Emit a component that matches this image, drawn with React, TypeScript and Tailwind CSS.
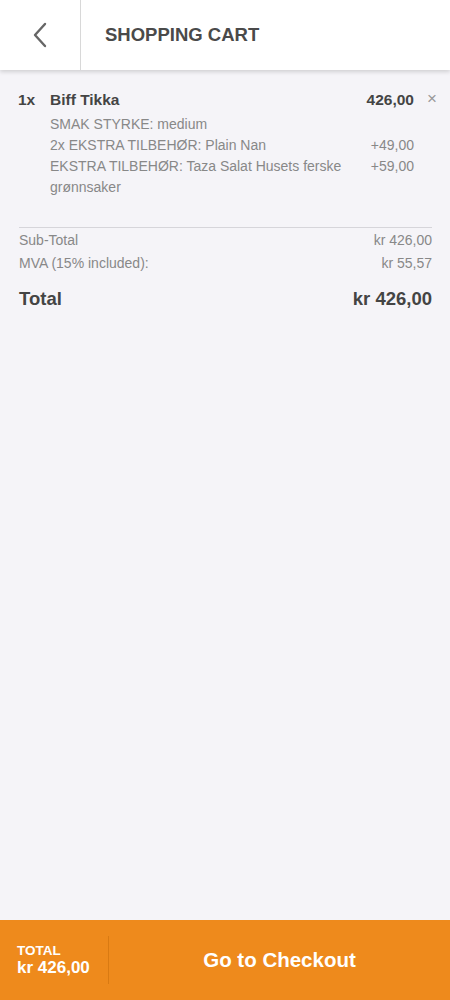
import React from "react";

export default function App() {
  return (
    <div className="w-[450px] h-[1000px] bg-[#f5f4f8] flex flex-col" style={{ fontFamily: "'Liberation Sans', Arial, sans-serif" }}>
      <header className="h-[70px] bg-white flex items-stretch shadow-[0_2px_4px_rgba(0,0,0,0.15)] relative z-10">
        <div className="w-[81px] border-r border-[#d8d8d8] flex items-center justify-center">
          <svg width="18" height="26" viewBox="0 0 18 26" fill="none">
            <path d="M14 2 L4 13 L14 24" stroke="#666" strokeWidth="2.4" strokeLinecap="round" strokeLinejoin="round" />
          </svg>
        </div>
        <div className="flex items-center pl-[24px] text-[18.5px] font-bold text-[#4a4a4a]">SHOPPING CART</div>
      </header>

      <main className="flex-1 pl-[19px] pr-[18px] pt-[20px]">
        <div className="flex">
          <div className="w-[31px] -ml-[1px] pl-0 text-[15.5px] font-bold text-[#444] leading-[20px]">1x</div>
          <div className="flex-1 ml-[1px]">
            <div className="flex justify-between text-[15.5px] font-bold text-[#444] leading-[20px]">
              <span>Biff Tikka</span>
              <span>426,00</span>
            </div>
            <div className="text-[14px] text-[#888] leading-[21px] mt-[4px]">
              <div className="flex justify-between"><span>SMAK STYRKE: medium</span></div>
              <div className="flex justify-between"><span>2x EKSTRA TILBEHØR: Plain Nan</span><span>+49,00</span></div>
              <div className="flex justify-between gap-[20px]"><span className="w-[300px]">EKSTRA TILBEHØR: Taza Salat Husets ferske grønnsaker</span><span>+59,00</span></div>
            </div>
          </div>
          <div className="w-[23px] flex justify-end text-[#999] text-[17px] leading-[18px] -mr-[5px]">×</div>
        </div>

        <div className="mt-[29px] border-t border-[#d6d5da]"></div>
        <div className="text-[14px] text-[#888] leading-[23px] pt-[1px]">
          <div className="flex justify-between"><span>Sub-Total</span><span>kr 426,00</span></div>
          <div className="flex justify-between"><span>MVA (15% included):</span><span>kr 55,57</span></div>
        </div>
        <div className="flex justify-between text-[18.5px] font-bold text-[#444] mt-[10px]">
          <span>Total</span><span>kr 426,00</span>
        </div>
      </main>

      <footer className="h-[80px] bg-[#ee8a1c] flex items-stretch">
        <div className="w-[109px] flex flex-col justify-center pl-[17px] text-white font-bold my-[16px] border-r border-[#d97a12]">
          <div className="text-[13.5px] leading-[14px]">TOTAL</div>
          <div className="text-[17px] leading-[19px]">kr 426,00</div>
        </div>
        <div className="flex-1 flex items-center justify-center text-white font-bold text-[20.5px]">Go to Checkout</div>
      </footer>
    </div>
  );
}
